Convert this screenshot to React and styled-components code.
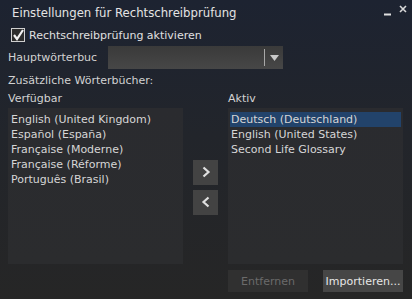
import styled, { createGlobalStyle } from 'styled-components';

const AVAILABLE = [
  'English (United Kingdom)',
  'Español (España)',
  'Française (Moderne)',
  'Française (Réforme)',
  'Português (Brasil)',
];

const ACTIVE = ['Deutsch (Deutschland)', 'English (United States)', 'Second Life Glossary'];

const GlobalStyle = createGlobalStyle`
  html, body {
    margin: 0;
    padding: 0;
    background: #222;
  }
  body {
    font-family: "DejaVu Sans", "Liberation Sans", sans-serif;
    font-size: 11px;
    color: #d2d2d2;
  }
`;

const Floater = styled.div`
  width: 412px;
  height: 299px;
  box-sizing: border-box;
  background: linear-gradient(180deg, #1d2331 0%, #22252b 45%, #262626 100%);
  overflow: hidden;
`;

const TitleBar = styled.div`
  display: flex;
  align-items: center;
  justify-content: space-between;
  height: 24px;
  padding: 0 5px 0 12px;
`;

const Title = styled.span`
  font-size: 11.7px;
  color: #e4e4e4;
  padding-top: 1px;
`;

const TitleControls = styled.div`
  display: flex;
  align-items: center;
  gap: 8px;
  padding-bottom: 6px;
`;

const Body = styled.div`
  padding: 3px 9px 0 8px;
`;

const CheckRow = styled.label`
  display: flex;
  align-items: center;
  gap: 4px;
  height: 16px;
  padding-left: 3px;
  color: #e0e0e0;
`;

const Box = styled.span`
  width: 12px;
  height: 12px;
  border: 1px solid #cfcfcf;
  background: #2d2d2d;
  display: flex;
  align-items: center;
  justify-content: center;
`;

const DictRow = styled.div`
  display: flex;
  align-items: center;
  margin-top: 3px;
  height: 23px;
`;

const DictLabel = styled.span`
  width: 100px;
`;

const Combo = styled.div`
  width: 175px;
  height: 23px;
  display: flex;
  align-items: center;
  justify-content: flex-end;
  background: linear-gradient(180deg, #3a3a3a 0%, #474747 100%);
`;

const ComboDivider = styled.span`
  width: 1px;
  height: 17px;
  background: #a8a8a8;
  margin-right: 5px;
`;

const SectionLabel = styled.div`
  margin-top: ${(p) => p.$top || 0}px;
  height: 14px;
  line-height: 14px;
`;

const Columns = styled.div`
  display: grid;
  grid-template-columns: 175px 25px 175px;
  column-gap: 10px;
  margin-top: 4px;
`;

const ColumnHead = styled.div`
  height: 14px;
  line-height: 14px;
  margin-bottom: 2px;
`;

const List = styled.ul`
  list-style: none;
  margin: 0;
  padding: 4px 2px;
  height: 156px;
  box-sizing: border-box;
  background: linear-gradient(180deg, #2a2b2f 0%, #2b2c2e 100%);
`;

const Item = styled.li`
  height: 15px;
  line-height: 15px;
  padding-left: 1px;
  color: #d6d6d6;
  background: ${(p) => (p.$selected ? '#22436b' : 'transparent')};
`;

const Movers = styled.div`
  grid-row: 2;
  grid-column: 2;
  display: flex;
  flex-direction: column;
  justify-content: center;
  gap: 5px;
  padding-top: 2px;
`;

const MoveButton = styled.button`
  width: 25px;
  height: 25px;
  border: none;
  padding: 0;
  background: #434343;
  display: flex;
  align-items: center;
  justify-content: center;
`;

const Footer = styled.div`
  display: flex;
  justify-content: flex-end;
  gap: 15px;
  margin-top: 6px;
`;

const ActionButton = styled.button`
  width: 80px;
  height: 22px;
  border: none;
  padding: 0;
  font-family: inherit;
  font-size: 11px;
  color: ${(p) => (p.disabled ? '#6b6b6b' : '#e6e6e6')};
  background: ${(p) => (p.disabled ? '#303030' : '#464646')};
`;

const Chevron = ({ dir }) => (
  <svg width="10" height="12" viewBox="0 0 10 12">
    <path
      d={dir === 'right' ? 'M2.5 1.5 L7.5 6 L2.5 10.5' : 'M7.5 1.5 L2.5 6 L7.5 10.5'}
      fill="none"
      stroke="#e0e0e0"
      strokeWidth="2.2"
    />
  </svg>
);

const App = () => {
  return (
    <>
      <GlobalStyle />
      <Floater>
        <TitleBar>
          <Title>Einstellungen für Rechtschreibprüfung</Title>
          <TitleControls>
            <svg width="7" height="3" viewBox="0 0 7 3" style={{ marginTop: 10 }}>
              <rect x="0" y="0.5" width="7" height="2" fill="#e0e0e0" />
            </svg>
            <svg width="8" height="8" viewBox="0 0 8 8">
              <path d="M1 1 L7 7 M7 1 L1 7" stroke="#d8d8d8" strokeWidth="1.6" />
            </svg>
          </TitleControls>
        </TitleBar>
        <Body>
          <CheckRow>
            <Box>
              <svg width="12" height="12" viewBox="0 0 12 12">
                <path d="M2 6 L5 10 L11 1" fill="none" stroke="#f2f2f2" strokeWidth="2.2" />
              </svg>
            </Box>
            Rechtschreibprüfung aktivieren
          </CheckRow>
          <DictRow>
            <DictLabel>Hauptwörterbuc</DictLabel>
            <Combo>
              <ComboDivider />
              <svg width="9" height="6" viewBox="0 0 9 6" style={{ marginRight: 4 }}>
                <path d="M0 0 H9 L4.5 6 Z" fill="#c8c8c8" />
              </svg>
            </Combo>
          </DictRow>
          <SectionLabel $top={5}>Zusätzliche Wörterbücher:</SectionLabel>
          <Columns>
            <ColumnHead>Verfügbar</ColumnHead>
            <div />
            <ColumnHead>Aktiv</ColumnHead>
            <List>
              {AVAILABLE.map((name) => (
                <Item key={name}>{name}</Item>
              ))}
            </List>
            <Movers>
              <MoveButton>
                <Chevron dir="right" />
              </MoveButton>
              <MoveButton>
                <Chevron dir="left" />
              </MoveButton>
            </Movers>
            <List>
              {ACTIVE.map((name, idx) => (
                <Item key={name} $selected={idx === 0}>
                  {name}
                </Item>
              ))}
            </List>
          </Columns>
          <Footer>
            <ActionButton disabled>Entfernen</ActionButton>
            <ActionButton>Importieren...</ActionButton>
          </Footer>
        </Body>
      </Floater>
    </>
  );
};

export default App;
